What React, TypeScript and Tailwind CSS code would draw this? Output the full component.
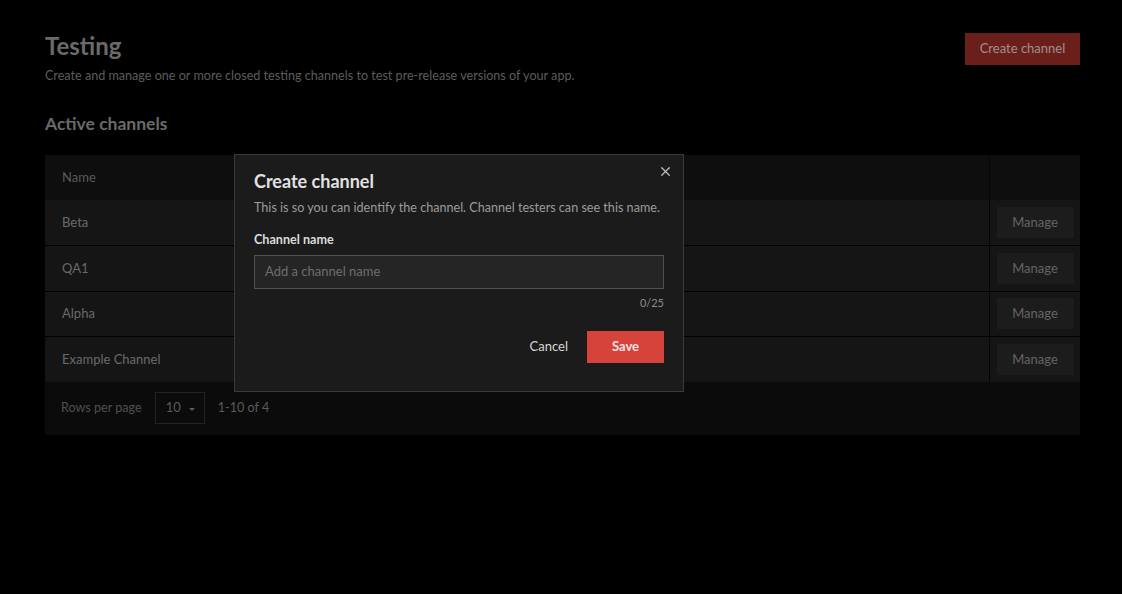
import { X } from "lucide-react";

const channels = ["Beta", "QA1", "Alpha", "Example Channel"];

export default function App() {
  return (
    <div className="relative min-h-[594px] w-full bg-black font-['Lato',sans-serif]">
      <div className="pl-[45px] pr-[42px] pt-[31px]">
        {/* Header */}
        <div className="flex items-start justify-between">
          <div>
            <h1 className="text-[24px] font-bold leading-[30px] text-[#6a6a6a]">Testing</h1>
            <p className="mt-[6px] text-[12.6px] leading-[18px] text-[#5c5c5c]">
              Create and manage one or more closed testing channels to test pre-release versions of your app.
            </p>
          </div>
          <button
            type="button"
            className="mt-[2px] h-[32px] w-[115px] bg-[#6b1f1b] text-[13px] text-[#a08f8d]"
          >
            Create channel
          </button>
        </div>

        <h2 className="mt-[27px] text-[17.5px] font-bold leading-[24px] text-[#6a6a6a]">Active channels</h2>

        {/* Table */}
        <div className="mt-[19px] w-full">
          <div className="flex h-[45px] bg-[#0e0e0e]">
            <div className="flex flex-1 items-center px-[17px] text-[13px] text-[#5a5a5a]">Name</div>
            <div className="w-[91px] border-l border-[#050505]" />
          </div>
          {channels.map((name, i) => (
            <div
              key={name}
              className={`flex bg-[#151515] ${i > 0 ? "h-[45.5px] border-t border-black" : "h-[45px]"}`}
            >
              <div className="flex flex-1 items-center px-[17px] text-[13px] text-[#6a6a6a]">{name}</div>
              <div className="flex w-[91px] items-center justify-center border-l border-[#050505]">
                <button
                  type="button"
                  className="h-[31px] w-[77px] bg-[#1c1c1c] text-[13px] text-[#646464]"
                >
                  Manage
                </button>
              </div>
            </div>
          ))}
          <div className="flex h-[53px] items-center bg-[#0b0b0b] px-[16px]">
            <span className="text-[12.6px] text-[#4f4f4f]">Rows per page</span>
            <div className="ml-[13px] flex h-[32px] w-[50px] items-center border border-[#232323] pl-[10px] text-[13px] text-[#5a5a5a]">
              10
              <span className="ml-[8px] mt-[2px] h-0 w-0 border-x-[3px] border-t-[3px] border-x-transparent border-t-[#5a5a5a]" />
            </div>
            <span className="ml-[13px] text-[12.6px] text-[#5a5a5a]">1-10 of 4</span>
          </div>
        </div>
      </div>

      {/* Dialog */}
      <div className="absolute left-[234px] top-[154px] h-[238px] w-[450px] border border-[#3a3a3a] bg-[#1b1b1b] px-[19px] pt-[15px]">
        <button type="button" className="absolute right-[10px] top-[9px] text-[#bdbdbd]">
          <X size={15} strokeWidth={2} />
        </button>
        <h3 className="text-[18px] font-bold leading-[23px] text-[#e2e2e2]">Create channel</h3>
        <p className="mt-[6px] whitespace-nowrap text-[12.6px] leading-[18px] text-[#9c9c9c]">
          This is so you can identify the channel. Channel testers can see this name.
        </p>
        <div className="mt-[15px] text-[12.6px] font-bold leading-[16px] text-[#dcdcdc]">Channel name</div>
        <div className="mt-[7px] flex h-[34px] w-full items-center border border-[#505050] bg-[#252525] px-[10px] text-[13px] text-[#6e6e6e]">
          Add a channel name
        </div>
        <div className="mt-[6px] text-right text-[11px] leading-[16px] text-[#8c8c8c]">0/25</div>
        <div className="mt-[20px] flex items-center justify-end">
          <button type="button" className="text-[13px] text-[#d6d6d6]">Cancel</button>
          <button
            type="button"
            className="ml-[19px] h-[32px] w-[77px] bg-[#d5433b] text-[13px] font-bold text-[#f3e3e2]"
          >
            Save
          </button>
        </div>
      </div>
    </div>
  );
}
